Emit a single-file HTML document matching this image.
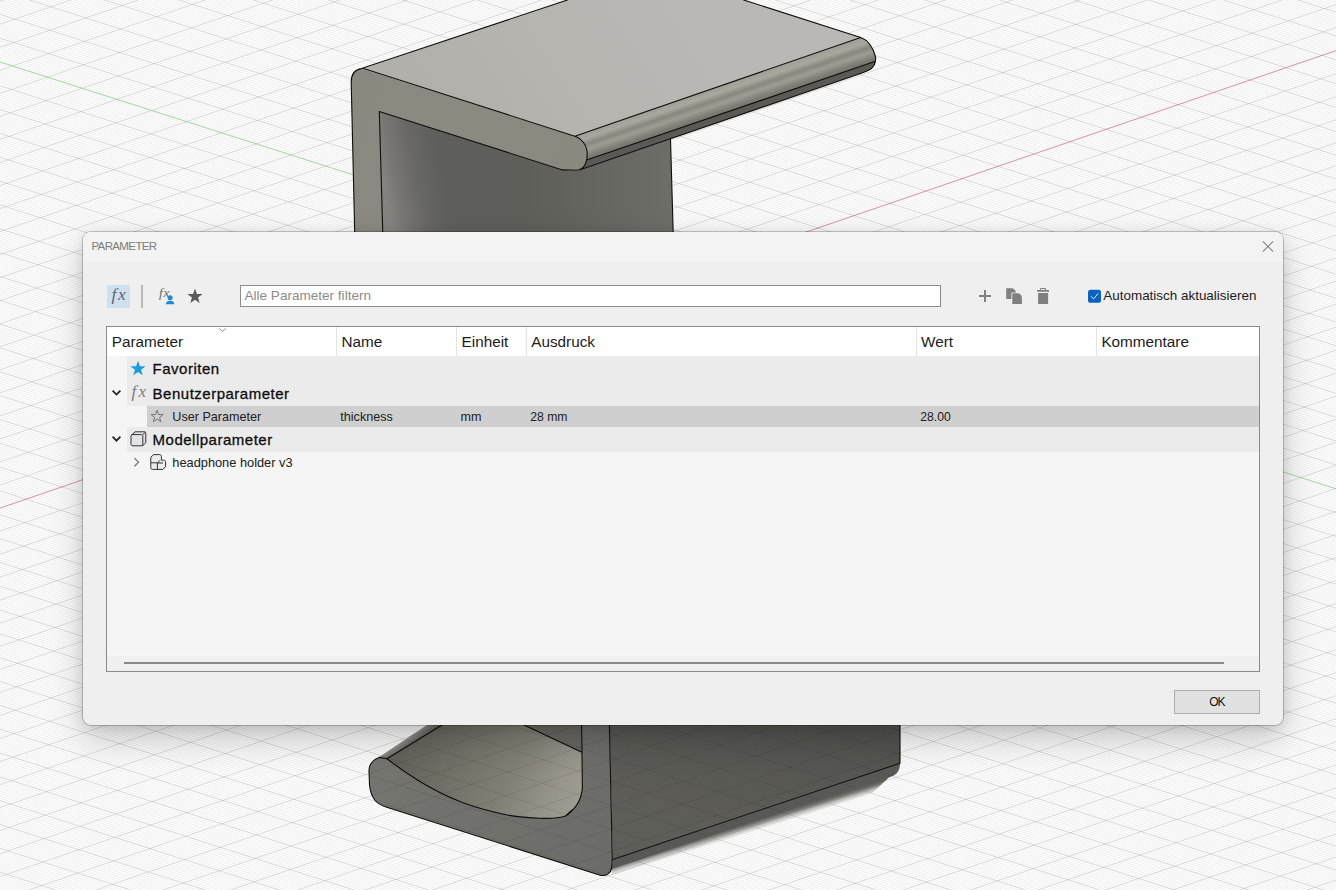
<!DOCTYPE html>
<html lang="de"><head><meta charset="utf-8"><title>PARAMETER</title>
<style>
html,body{margin:0;padding:0}
body{width:1336px;height:890px;overflow:hidden;position:relative;background:#fff;font-family:"Liberation Sans",sans-serif;color:#1e1e1e}
#bg{position:absolute;left:0;top:0}
#dlg{position:absolute;left:83px;top:232px;width:1200px;height:493px;background:#efefef;border-radius:8px;box-shadow:0 0 0 1px rgba(0,0,0,.2),0 14px 34px rgba(0,0,0,.2),0 2px 12px rgba(0,0,0,.10)}
#ttl{position:absolute;left:83px;top:232px;width:1200px;height:30px;background:#f3f3f3;border-radius:8px 8px 0 0}
.a{position:absolute}
.t{position:absolute;white-space:nowrap;line-height:1}
.h{font-size:15.3px;color:#1c1c1c}
.g{font-size:15px;color:#0e0e0e;letter-spacing:.5px;-webkit-text-stroke:.3px #0e0e0e}
.r{font-size:12.6px;color:#202020}
#ic{position:absolute;left:0;top:0}
</style></head>
<body>
<svg id="bg" width="1336" height="890" viewBox="0 0 1336 890">
<defs>
<g id="grid">
<path d="M0 3.5L1336 -453.9M0 5.8L1336 -451.6M0 8.1L1336 -449.3M0 10.4L1336 -447.0M0 12.7L1336 -444.7M0 15.0L1336 -442.4M0 17.3L1336 -440.1M0 19.6L1336 -437.8M0 21.9L1336 -435.5M0 26.5L1336 -430.9M0 28.8L1336 -428.6M0 31.1L1336 -426.3M0 33.5L1336 -424.0M0 35.8L1336 -421.7M0 38.1L1336 -419.4M0 40.4L1336 -417.1M0 42.7L1336 -414.8M0 45.0L1336 -412.5M0 49.6L1336 -407.9M0 51.9L1336 -405.6M0 54.2L1336 -403.3M0 56.5L1336 -401.0M0 58.8L1336 -398.6M0 61.1L1336 -396.3M0 63.4L1336 -394.0M0 65.7L1336 -391.7M0 68.0L1336 -389.4M0 72.6L1336 -384.8M0 74.9L1336 -382.5M0 77.2L1336 -380.2M0 79.5L1336 -377.9M0 81.8L1336 -375.6M0 84.1L1336 -373.3M0 86.4L1336 -371.0M0 88.7L1336 -368.7M0 91.1L1336 -366.4M0 95.7L1336 -361.8M0 98.0L1336 -359.5M0 100.3L1336 -357.2M0 102.6L1336 -354.9M0 104.9L1336 -352.6M0 107.2L1336 -350.3M0 109.5L1336 -348.0M0 111.8L1336 -345.7M0 114.1L1336 -343.4M0 118.7L1336 -338.7M0 121.0L1336 -336.4M0 123.3L1336 -334.1M0 125.6L1336 -331.8M0 127.9L1336 -329.5M0 130.2L1336 -327.2M0 132.5L1336 -324.9M0 134.8L1336 -322.6M0 137.1L1336 -320.3M0 141.7L1336 -315.7M0 144.0L1336 -313.4M0 146.3L1336 -311.1M0 148.7L1336 -308.8M0 151.0L1336 -306.5M0 153.3L1336 -304.2M0 155.6L1336 -301.9M0 157.9L1336 -299.6M0 160.2L1336 -297.3M0 164.8L1336 -292.7M0 167.1L1336 -290.4M0 169.4L1336 -288.1M0 171.7L1336 -285.8M0 174.0L1336 -283.4M0 176.3L1336 -281.1M0 178.6L1336 -278.8M0 180.9L1336 -276.5M0 183.2L1336 -274.2M0 187.8L1336 -269.6M0 190.1L1336 -267.3M0 192.4L1336 -265.0M0 194.7L1336 -262.7M0 197.0L1336 -260.4M0 199.3L1336 -258.1M0 201.6L1336 -255.8M0 203.9L1336 -253.5M0 206.3L1336 -251.2M0 210.9L1336 -246.6M0 213.2L1336 -244.3M0 215.5L1336 -242.0M0 217.8L1336 -239.7M0 220.1L1336 -237.4M0 222.4L1336 -235.1M0 224.7L1336 -232.8M0 227.0L1336 -230.5M0 229.3L1336 -228.2M0 233.9L1336 -223.5M0 236.2L1336 -221.2M0 238.5L1336 -218.9M0 240.8L1336 -216.6M0 243.1L1336 -214.3M0 245.4L1336 -212.0M0 247.7L1336 -209.7M0 250.0L1336 -207.4M0 252.3L1336 -205.1M0 256.9L1336 -200.5M0 259.2L1336 -198.2M0 261.5L1336 -195.9M0 263.9L1336 -193.6M0 266.2L1336 -191.3M0 268.5L1336 -189.0M0 270.8L1336 -186.7M0 273.1L1336 -184.4M0 275.4L1336 -182.1M0 280.0L1336 -177.5M0 282.3L1336 -175.2M0 284.6L1336 -172.9M0 286.9L1336 -170.6M0 289.2L1336 -168.2M0 291.5L1336 -165.9M0 293.8L1336 -163.6M0 296.1L1336 -161.3M0 298.4L1336 -159.0M0 303.0L1336 -154.4M0 305.3L1336 -152.1M0 307.6L1336 -149.8M0 309.9L1336 -147.5M0 312.2L1336 -145.2M0 314.5L1336 -142.9M0 316.8L1336 -140.6M0 319.1L1336 -138.3M0 321.5L1336 -136.0M0 326.1L1336 -131.4M0 328.4L1336 -129.1M0 330.7L1336 -126.8M0 333.0L1336 -124.5M0 335.3L1336 -122.2M0 337.6L1336 -119.9M0 339.9L1336 -117.6M0 342.2L1336 -115.3M0 344.5L1336 -113.0M0 349.1L1336 -108.3M0 351.4L1336 -106.0M0 353.7L1336 -103.7M0 356.0L1336 -101.4M0 358.3L1336 -99.1M0 360.6L1336 -96.8M0 362.9L1336 -94.5M0 365.2L1336 -92.2M0 367.5L1336 -89.9M0 372.1L1336 -85.3M0 374.4L1336 -83.0M0 376.7L1336 -80.7M0 379.1L1336 -78.4M0 381.4L1336 -76.1M0 383.7L1336 -73.8M0 386.0L1336 -71.5M0 388.3L1336 -69.2M0 390.6L1336 -66.9M0 395.2L1336 -62.3M0 397.5L1336 -60.0M0 399.8L1336 -57.7M0 402.1L1336 -55.4M0 404.4L1336 -53.0M0 406.7L1336 -50.7M0 409.0L1336 -48.4M0 411.3L1336 -46.1M0 413.6L1336 -43.8M0 418.2L1336 -39.2M0 420.5L1336 -36.9M0 422.8L1336 -34.6M0 425.1L1336 -32.3M0 427.4L1336 -30.0M0 429.7L1336 -27.7M0 432.0L1336 -25.4M0 434.3L1336 -23.1M0 436.7L1336 -20.8M0 441.3L1336 -16.2M0 443.6L1336 -13.9M0 445.9L1336 -11.6M0 448.2L1336 -9.3M0 450.5L1336 -7.0M0 452.8L1336 -4.7M0 455.1L1336 -2.4M0 457.4L1336 -0.1M0 459.7L1336 2.2M0 464.3L1336 6.9M0 466.6L1336 9.2M0 468.9L1336 11.5M0 471.2L1336 13.8M0 473.5L1336 16.1M0 475.8L1336 18.4M0 478.1L1336 20.7M0 480.4L1336 23.0M0 482.7L1336 25.3M0 487.3L1336 29.9M0 489.6L1336 32.2M0 491.9L1336 34.5M0 494.3L1336 36.8M0 496.6L1336 39.1M0 498.9L1336 41.4M0 501.2L1336 43.7M0 503.5L1336 46.0M0 505.8L1336 48.3M0 510.4L1336 52.9M0 512.7L1336 55.2M0 515.0L1336 57.5M0 517.3L1336 59.8M0 519.6L1336 62.2M0 521.9L1336 64.5M0 524.2L1336 66.8M0 526.5L1336 69.1M0 528.8L1336 71.4M0 533.4L1336 76.0M0 535.7L1336 78.3M0 538.0L1336 80.6M0 540.3L1336 82.9M0 542.6L1336 85.2M0 544.9L1336 87.5M0 547.2L1336 89.8M0 549.5L1336 92.1M0 551.9L1336 94.4M0 556.5L1336 99.0M0 558.8L1336 101.3M0 561.1L1336 103.6M0 563.4L1336 105.9M0 565.7L1336 108.2M0 568.0L1336 110.5M0 570.3L1336 112.8M0 572.6L1336 115.1M0 574.9L1336 117.4M0 579.5L1336 122.1M0 581.8L1336 124.4M0 584.1L1336 126.7M0 586.4L1336 129.0M0 588.7L1336 131.3M0 591.0L1336 133.6M0 593.3L1336 135.9M0 595.6L1336 138.2M0 597.9L1336 140.5M0 602.5L1336 145.1M0 604.8L1336 147.4M0 607.1L1336 149.7M0 609.5L1336 152.0M0 611.8L1336 154.3M0 614.1L1336 156.6M0 616.4L1336 158.9M0 618.7L1336 161.2M0 621.0L1336 163.5M0 625.6L1336 168.1M0 627.9L1336 170.4M0 630.2L1336 172.7M0 632.5L1336 175.0M0 634.8L1336 177.4M0 637.1L1336 179.7M0 639.4L1336 182.0M0 641.7L1336 184.3M0 644.0L1336 186.6M0 648.6L1336 191.2M0 650.9L1336 193.5M0 653.2L1336 195.8M0 655.5L1336 198.1M0 657.8L1336 200.4M0 660.1L1336 202.7M0 662.4L1336 205.0M0 664.7L1336 207.3M0 667.1L1336 209.6M0 671.7L1336 214.2M0 674.0L1336 216.5M0 676.3L1336 218.8M0 678.6L1336 221.1M0 680.9L1336 223.4M0 683.2L1336 225.7M0 685.5L1336 228.0M0 687.8L1336 230.3M0 690.1L1336 232.6M0 694.7L1336 237.3M0 697.0L1336 239.6M0 699.3L1336 241.9M0 701.6L1336 244.2M0 703.9L1336 246.5M0 706.2L1336 248.8M0 708.5L1336 251.1M0 710.8L1336 253.4M0 713.1L1336 255.7M0 717.7L1336 260.3M0 720.0L1336 262.6M0 722.3L1336 264.9M0 724.7L1336 267.2M0 727.0L1336 269.5M0 729.3L1336 271.8M0 731.6L1336 274.1M0 733.9L1336 276.4M0 736.2L1336 278.7M0 740.8L1336 283.3M0 743.1L1336 285.6M0 745.4L1336 287.9M0 747.7L1336 290.2M0 750.0L1336 292.6M0 752.3L1336 294.9M0 754.6L1336 297.2M0 756.9L1336 299.5M0 759.2L1336 301.8M0 763.8L1336 306.4M0 766.1L1336 308.7M0 768.4L1336 311.0M0 770.7L1336 313.3M0 773.0L1336 315.6M0 775.3L1336 317.9M0 777.6L1336 320.2M0 779.9L1336 322.5M0 782.3L1336 324.8M0 786.9L1336 329.4M0 789.2L1336 331.7M0 791.5L1336 334.0M0 793.8L1336 336.3M0 796.1L1336 338.6M0 798.4L1336 340.9M0 800.7L1336 343.2M0 803.0L1336 345.5M0 805.3L1336 347.8M0 809.9L1336 352.5M0 812.2L1336 354.8M0 814.5L1336 357.1M0 816.8L1336 359.4M0 819.1L1336 361.7M0 821.4L1336 364.0M0 823.7L1336 366.3M0 826.0L1336 368.6M0 828.3L1336 370.9M0 832.9L1336 375.5M0 835.2L1336 377.8M0 837.5L1336 380.1M0 839.9L1336 382.4M0 842.2L1336 384.7M0 844.5L1336 387.0M0 846.8L1336 389.3M0 849.1L1336 391.6M0 851.4L1336 393.9M0 856.0L1336 398.5M0 858.3L1336 400.8M0 860.6L1336 403.1M0 862.9L1336 405.4M0 865.2L1336 407.8M0 867.5L1336 410.1M0 869.8L1336 412.4M0 872.1L1336 414.7M0 874.4L1336 417.0M0 879.0L1336 421.6M0 881.3L1336 423.9M0 883.6L1336 426.2M0 885.9L1336 428.5M0 888.2L1336 430.8M0 890.5L1336 433.1M0 892.8L1336 435.4M0 895.1L1336 437.7M0 897.5L1336 440.0M0 902.1L1336 444.6M0 904.4L1336 446.9M0 906.7L1336 449.2M0 909.0L1336 451.5M0 911.3L1336 453.8M0 913.6L1336 456.1M0 915.9L1336 458.4M0 918.2L1336 460.7M0 920.5L1336 463.0M0 925.1L1336 467.7M0 927.4L1336 470.0M0 929.7L1336 472.3M0 932.0L1336 474.6M0 934.3L1336 476.9M0 936.6L1336 479.2M0 938.9L1336 481.5M0 941.2L1336 483.8M0 943.5L1336 486.1M0 948.1L1336 490.7M0 950.4L1336 493.0M0 952.7L1336 495.3M0 955.1L1336 497.6M0 957.4L1336 499.9M0 959.7L1336 502.2M0 962.0L1336 504.5M0 964.3L1336 506.8M0 966.6L1336 509.1M0 971.2L1336 513.7M0 973.5L1336 516.0M0 975.8L1336 518.3M0 978.1L1336 520.6M0 980.4L1336 523.0M0 982.7L1336 525.3M0 985.0L1336 527.6M0 987.3L1336 529.9M0 989.6L1336 532.2M0 994.2L1336 536.8M0 996.5L1336 539.1M0 998.8L1336 541.4M0 1001.1L1336 543.7M0 1003.4L1336 546.0M0 1005.7L1336 548.3M0 1008.0L1336 550.6M0 1010.3L1336 552.9M0 1012.7L1336 555.2M0 1017.3L1336 559.8M0 1019.6L1336 562.1M0 1021.9L1336 564.4M0 1024.2L1336 566.7M0 1026.5L1336 569.0M0 1028.8L1336 571.3M0 1031.1L1336 573.6M0 1033.4L1336 575.9M0 1035.7L1336 578.2M0 1040.3L1336 582.9M0 1042.6L1336 585.2M0 1044.9L1336 587.5M0 1047.2L1336 589.8M0 1049.5L1336 592.1M0 1051.8L1336 594.4M0 1054.1L1336 596.7M0 1056.4L1336 599.0M0 1058.7L1336 601.3M0 1063.3L1336 605.9M0 1065.6L1336 608.2M0 1067.9L1336 610.5M0 1070.3L1336 612.8M0 1072.6L1336 615.1M0 1074.9L1336 617.4M0 1077.2L1336 619.7M0 1079.5L1336 622.0M0 1081.8L1336 624.3M0 1086.4L1336 628.9M0 1088.7L1336 631.2M0 1091.0L1336 633.5M0 1093.3L1336 635.8M0 1095.6L1336 638.2M0 1097.9L1336 640.5M0 1100.2L1336 642.8M0 1102.5L1336 645.1M0 1104.8L1336 647.4M0 1109.4L1336 652.0M0 1111.7L1336 654.3M0 1114.0L1336 656.6M0 1116.3L1336 658.9M0 1118.6L1336 661.2M0 1120.9L1336 663.5M0 1123.2L1336 665.8M0 1125.5L1336 668.1M0 1127.9L1336 670.4M0 1132.5L1336 675.0M0 1134.8L1336 677.3M0 1137.1L1336 679.6M0 1139.4L1336 681.9M0 1141.7L1336 684.2M0 1144.0L1336 686.5M0 1146.3L1336 688.8M0 1148.6L1336 691.1M0 1150.9L1336 693.4M0 1155.5L1336 698.1M0 1157.8L1336 700.4M0 1160.1L1336 702.7M0 1162.4L1336 705.0M0 1164.7L1336 707.3M0 1167.0L1336 709.6M0 1169.3L1336 711.9M0 1171.6L1336 714.2M0 1173.9L1336 716.5M0 1178.5L1336 721.1M0 1180.8L1336 723.4M0 1183.1L1336 725.7M0 1185.5L1336 728.0M0 1187.8L1336 730.3M0 1190.1L1336 732.6M0 1192.4L1336 734.9M0 1194.7L1336 737.2M0 1197.0L1336 739.5M0 1201.6L1336 744.1M0 1203.9L1336 746.4M0 1206.2L1336 748.7M0 1208.5L1336 751.0M0 1210.8L1336 753.4M0 1213.1L1336 755.7M0 1215.4L1336 758.0M0 1217.7L1336 760.3M0 1220.0L1336 762.6M0 1224.6L1336 767.2M0 1226.9L1336 769.5M0 1229.2L1336 771.8M0 1231.5L1336 774.1M0 1233.8L1336 776.4M0 1236.1L1336 778.7M0 1238.4L1336 781.0M0 1240.7L1336 783.3M0 1243.1L1336 785.6M0 1247.7L1336 790.2M0 1250.0L1336 792.5M0 1252.3L1336 794.8M0 1254.6L1336 797.1M0 1256.9L1336 799.4M0 1259.2L1336 801.7M0 1261.5L1336 804.0M0 1263.8L1336 806.3M0 1266.1L1336 808.6M0 1270.7L1336 813.3M0 1273.0L1336 815.6M0 1275.3L1336 817.9M0 1277.6L1336 820.2M0 1279.9L1336 822.5M0 1282.2L1336 824.8M0 1284.5L1336 827.1M0 1286.8L1336 829.4M0 1289.1L1336 831.7M0 1293.7L1336 836.3M0 1296.0L1336 838.6M0 1298.3L1336 840.9M0 1300.7L1336 843.2M0 1303.0L1336 845.5M0 1305.3L1336 847.8M0 1307.6L1336 850.1M0 1309.9L1336 852.4M0 1312.2L1336 854.7M0 1316.8L1336 859.3M0 1319.1L1336 861.6M0 1321.4L1336 863.9M0 1323.7L1336 866.2M0 1326.0L1336 868.6M0 1328.3L1336 870.9M0 1330.6L1336 873.2M0 1332.9L1336 875.5M0 1335.2L1336 877.8M0 1339.8L1336 882.4M0 1342.1L1336 884.7M0 1344.4L1336 887.0M0 1346.7L1336 889.3M0 -426.6L1336 0.3M0 -424.2L1336 2.7M0 -421.8L1336 5.1M0 -419.4L1336 7.4M0 -417.0L1336 9.8M0 -412.3L1336 14.6M0 -409.9L1336 17.0M0 -407.5L1336 19.4M0 -405.1L1336 21.7M0 -402.7L1336 24.1M0 -400.3L1336 26.5M0 -398.0L1336 28.9M0 -395.6L1336 31.3M0 -393.2L1336 33.7M0 -388.4L1336 38.4M0 -386.0L1336 40.8M0 -383.7L1336 43.2M0 -381.3L1336 45.6M0 -378.9L1336 48.0M0 -376.5L1336 50.3M0 -374.1L1336 52.7M0 -371.7L1336 55.1M0 -369.4L1336 57.5M0 -364.6L1336 62.3M0 -362.2L1336 64.6M0 -359.8L1336 67.0M0 -357.5L1336 69.4M0 -355.1L1336 71.8M0 -352.7L1336 74.2M0 -350.3L1336 76.6M0 -347.9L1336 78.9M0 -345.5L1336 81.3M0 -340.8L1336 86.1M0 -338.4L1336 88.5M0 -336.0L1336 90.8M0 -333.6L1336 93.2M0 -331.2L1336 95.6M0 -328.9L1336 98.0M0 -326.5L1336 100.4M0 -324.1L1336 102.8M0 -321.7L1336 105.1M0 -316.9L1336 109.9M0 -314.6L1336 112.3M0 -312.2L1336 114.7M0 -309.8L1336 117.1M0 -307.4L1336 119.4M0 -305.0L1336 121.8M0 -302.6L1336 124.2M0 -300.3L1336 126.6M0 -297.9L1336 129.0M0 -293.1L1336 133.7M0 -290.7L1336 136.1M0 -288.3L1336 138.5M0 -286.0L1336 140.9M0 -283.6L1336 143.3M0 -281.2L1336 145.7M0 -278.8L1336 148.0M0 -276.4L1336 150.4M0 -274.0L1336 152.8M0 -269.3L1336 157.6M0 -266.9L1336 160.0M0 -264.5L1336 162.3M0 -262.1L1336 164.7M0 -259.7L1336 167.1M0 -257.4L1336 169.5M0 -255.0L1336 171.9M0 -252.6L1336 174.3M0 -250.2L1336 176.6M0 -245.4L1336 181.4M0 -243.1L1336 183.8M0 -240.7L1336 186.2M0 -238.3L1336 188.6M0 -235.9L1336 190.9M0 -233.5L1336 193.3M0 -231.2L1336 195.7M0 -228.8L1336 198.1M0 -226.4L1336 200.5M0 -221.6L1336 205.2M0 -219.2L1336 207.6M0 -216.9L1336 210.0M0 -214.5L1336 212.4M0 -212.1L1336 214.8M0 -209.7L1336 217.1M0 -207.3L1336 219.5M0 -204.9L1336 221.9M0 -202.6L1336 224.3M0 -197.8L1336 229.1M0 -195.4L1336 231.4M0 -193.0L1336 233.8M0 -190.6L1336 236.2M0 -188.3L1336 238.6M0 -185.9L1336 241.0M0 -183.5L1336 243.4M0 -181.1L1336 245.7M0 -178.7L1336 248.1M0 -174.0L1336 252.9M0 -171.6L1336 255.3M0 -169.2L1336 257.7M0 -166.8L1336 260.0M0 -164.4L1336 262.4M0 -162.0L1336 264.8M0 -159.7L1336 267.2M0 -157.3L1336 269.6M0 -154.9L1336 272.0M0 -150.1L1336 276.7M0 -147.7L1336 279.1M0 -145.4L1336 281.5M0 -143.0L1336 283.9M0 -140.6L1336 286.3M0 -138.2L1336 288.6M0 -135.8L1336 291.0M0 -133.4L1336 293.4M0 -131.1L1336 295.8M0 -126.3L1336 300.6M0 -123.9L1336 302.9M0 -121.5L1336 305.3M0 -119.2L1336 307.7M0 -116.8L1336 310.1M0 -114.4L1336 312.5M0 -112.0L1336 314.9M0 -109.6L1336 317.2M0 -107.2L1336 319.6M0 -102.5L1336 324.4M0 -100.1L1336 326.8M0 -97.7L1336 329.1M0 -95.3L1336 331.5M0 -92.9L1336 333.9M0 -90.6L1336 336.3M0 -88.2L1336 338.7M0 -85.8L1336 341.1M0 -83.4L1336 343.4M0 -78.6L1336 348.2M0 -76.3L1336 350.6M0 -73.9L1336 353.0M0 -71.5L1336 355.4M0 -69.1L1336 357.7M0 -66.7L1336 360.1M0 -64.3L1336 362.5M0 -62.0L1336 364.9M0 -59.6L1336 367.3M0 -54.8L1336 372.0M0 -52.4L1336 374.4M0 -50.0L1336 376.8M0 -47.7L1336 379.2M0 -45.3L1336 381.6M0 -42.9L1336 384.0M0 -40.5L1336 386.3M0 -38.1L1336 388.7M0 -35.7L1336 391.1M0 -31.0L1336 395.9M0 -28.6L1336 398.3M0 -26.2L1336 400.6M0 -23.8L1336 403.0M0 -21.4L1336 405.4M0 -19.1L1336 407.8M0 -16.7L1336 410.2M0 -14.3L1336 412.6M0 -11.9L1336 414.9M0 -7.2L1336 419.7M0 -4.8L1336 422.1M0 -2.4L1336 424.5M0 -0.0L1336 426.9M0 2.4L1336 429.2M0 4.8L1336 431.6M0 7.1L1336 434.0M0 9.5L1336 436.4M0 11.9L1336 438.8M0 16.7L1336 443.5M0 19.1L1336 445.9M0 21.4L1336 448.3M0 23.8L1336 450.7M0 26.2L1336 453.1M0 28.6L1336 455.4M0 31.0L1336 457.8M0 33.4L1336 460.2M0 35.7L1336 462.6M0 40.5L1336 467.4M0 42.9L1336 469.7M0 45.3L1336 472.1M0 47.7L1336 474.5M0 50.0L1336 476.9M0 52.4L1336 479.3M0 54.8L1336 481.7M0 57.2L1336 484.0M0 59.6L1336 486.4M0 64.3L1336 491.2M0 66.7L1336 493.6M0 69.1L1336 496.0M0 71.5L1336 498.3M0 73.9L1336 500.7M0 76.3L1336 503.1M0 78.6L1336 505.5M0 81.0L1336 507.9M0 83.4L1336 510.3M0 88.2L1336 515.0M0 90.6L1336 517.4M0 92.9L1336 519.8M0 95.3L1336 522.2M0 97.7L1336 524.6M0 100.1L1336 526.9M0 102.5L1336 529.3M0 104.9L1336 531.7M0 107.2L1336 534.1M0 112.0L1336 538.9M0 114.4L1336 541.2M0 116.8L1336 543.6M0 119.1L1336 546.0M0 121.5L1336 548.4M0 123.9L1336 550.8M0 126.3L1336 553.1M0 128.7L1336 555.5M0 131.1L1336 557.9M0 135.8L1336 562.7M0 138.2L1336 565.1M0 140.6L1336 567.4M0 143.0L1336 569.8M0 145.4L1336 572.2M0 147.7L1336 574.6M0 150.1L1336 577.0M0 152.5L1336 579.4M0 154.9L1336 581.7M0 159.7L1336 586.5M0 162.0L1336 588.9M0 164.4L1336 591.3M0 166.8L1336 593.7M0 169.2L1336 596.0M0 171.6L1336 598.4M0 174.0L1336 600.8M0 176.3L1336 603.2M0 178.7L1336 605.6M0 183.5L1336 610.3M0 185.9L1336 612.7M0 188.3L1336 615.1M0 190.6L1336 617.5M0 193.0L1336 619.9M0 195.4L1336 622.3M0 197.8L1336 624.6M0 200.2L1336 627.0M0 202.6L1336 629.4M0 207.3L1336 634.2M0 209.7L1336 636.6M0 212.1L1336 638.9M0 214.5L1336 641.3M0 216.9L1336 643.7M0 219.2L1336 646.1M0 221.6L1336 648.5M0 224.0L1336 650.9M0 226.4L1336 653.2M0 231.1L1336 658.0M0 233.5L1336 660.4M0 235.9L1336 662.8M0 238.3L1336 665.2M0 240.7L1336 667.5M0 243.1L1336 669.9M0 245.4L1336 672.3M0 247.8L1336 674.7M0 250.2L1336 677.1M0 255.0L1336 681.8M0 257.4L1336 684.2M0 259.7L1336 686.6M0 262.1L1336 689.0M0 264.5L1336 691.4M0 266.9L1336 693.7M0 269.3L1336 696.1M0 271.7L1336 698.5M0 274.0L1336 700.9M0 278.8L1336 705.7M0 281.2L1336 708.0M0 283.6L1336 710.4M0 286.0L1336 712.8M0 288.3L1336 715.2M0 290.7L1336 717.6M0 293.1L1336 720.0M0 295.5L1336 722.3M0 297.9L1336 724.7M0 302.6L1336 729.5M0 305.0L1336 731.9M0 307.4L1336 734.3M0 309.8L1336 736.6M0 312.2L1336 739.0M0 314.6L1336 741.4M0 316.9L1336 743.8M0 319.3L1336 746.2M0 321.7L1336 748.6M0 326.5L1336 753.3M0 328.9L1336 755.7M0 331.2L1336 758.1M0 333.6L1336 760.5M0 336.0L1336 762.9M0 338.4L1336 765.2M0 340.8L1336 767.6M0 343.2L1336 770.0M0 345.5L1336 772.4M0 350.3L1336 777.2M0 352.7L1336 779.5M0 355.1L1336 781.9M0 357.4L1336 784.3M0 359.8L1336 786.7M0 362.2L1336 789.1M0 364.6L1336 791.5M0 367.0L1336 793.8M0 369.4L1336 796.2M0 374.1L1336 801.0M0 376.5L1336 803.4M0 378.9L1336 805.7M0 381.3L1336 808.1M0 383.7L1336 810.5M0 386.0L1336 812.9M0 388.4L1336 815.3M0 390.8L1336 817.7M0 393.2L1336 820.0M0 398.0L1336 824.8M0 400.3L1336 827.2M0 402.7L1336 829.6M0 405.1L1336 832.0M0 407.5L1336 834.3M0 409.9L1336 836.7M0 412.3L1336 839.1M0 414.6L1336 841.5M0 417.0L1336 843.9M0 421.8L1336 848.6M0 424.2L1336 851.0M0 426.6L1336 853.4M0 428.9L1336 855.8M0 431.3L1336 858.2M0 433.7L1336 860.6M0 436.1L1336 862.9M0 438.5L1336 865.3M0 440.9L1336 867.7M0 445.6L1336 872.5M0 448.0L1336 874.9M0 450.4L1336 877.2M0 452.8L1336 879.6M0 455.2L1336 882.0M0 457.5L1336 884.4M0 459.9L1336 886.8M0 462.3L1336 889.2M0 464.7L1336 891.5M0 469.4L1336 896.3M0 471.8L1336 898.7M0 474.2L1336 901.1M0 476.6L1336 903.5M0 479.0L1336 905.8M0 481.4L1336 908.2M0 483.7L1336 910.6M0 486.1L1336 913.0M0 488.5L1336 915.4M0 493.3L1336 920.1M0 495.7L1336 922.5M0 498.0L1336 924.9M0 500.4L1336 927.3M0 502.8L1336 929.7M0 505.2L1336 932.0M0 507.6L1336 934.4M0 510.0L1336 936.8M0 512.3L1336 939.2M0 517.1L1336 944.0M0 519.5L1336 946.3M0 521.9L1336 948.7M0 524.3L1336 951.1M0 526.6L1336 953.5M0 529.0L1336 955.9M0 531.4L1336 958.3M0 533.8L1336 960.6M0 536.2L1336 963.0M0 540.9L1336 967.8M0 543.3L1336 970.2M0 545.7L1336 972.6M0 548.1L1336 974.9M0 550.5L1336 977.3M0 552.9L1336 979.7M0 555.2L1336 982.1M0 557.6L1336 984.5M0 560.0L1336 986.9M0 564.8L1336 991.6M0 567.2L1336 994.0M0 569.5L1336 996.4M0 571.9L1336 998.8M0 574.3L1336 1001.2M0 576.7L1336 1003.5M0 579.1L1336 1005.9M0 581.5L1336 1008.3M0 583.8L1336 1010.7M0 588.6L1336 1015.5M0 591.0L1336 1017.8M0 593.4L1336 1020.2M0 595.7L1336 1022.6M0 598.1L1336 1025.0M0 600.5L1336 1027.4M0 602.9L1336 1029.8M0 605.3L1336 1032.1M0 607.7L1336 1034.5M0 612.4L1336 1039.3M0 614.8L1336 1041.7M0 617.2L1336 1044.0M0 619.6L1336 1046.4M0 622.0L1336 1048.8M0 624.3L1336 1051.2M0 626.7L1336 1053.6M0 629.1L1336 1056.0M0 631.5L1336 1058.3M0 636.3L1336 1063.1M0 638.6L1336 1065.5M0 641.0L1336 1067.9M0 643.4L1336 1070.3M0 645.8L1336 1072.6M0 648.2L1336 1075.0M0 650.6L1336 1077.4M0 652.9L1336 1079.8M0 655.3L1336 1082.2M0 660.1L1336 1086.9M0 662.5L1336 1089.3M0 664.9L1336 1091.7M0 667.2L1336 1094.1M0 669.6L1336 1096.5M0 672.0L1336 1098.9M0 674.4L1336 1101.2M0 676.8L1336 1103.6M0 679.2L1336 1106.0M0 683.9L1336 1110.8M0 686.3L1336 1113.2M0 688.7L1336 1115.5M0 691.1L1336 1117.9M0 693.5L1336 1120.3M0 695.8L1336 1122.7M0 698.2L1336 1125.1M0 700.6L1336 1127.5M0 703.0L1336 1129.8M0 707.7L1336 1134.6M0 710.1L1336 1137.0M0 712.5L1336 1139.4M0 714.9L1336 1141.8M0 717.3L1336 1144.1M0 719.7L1336 1146.5M0 722.0L1336 1148.9M0 724.4L1336 1151.3M0 726.8L1336 1153.7M0 731.6L1336 1158.4M0 734.0L1336 1160.8M0 736.3L1336 1163.2M0 738.7L1336 1165.6M0 741.1L1336 1168.0M0 743.5L1336 1170.3M0 745.9L1336 1172.7M0 748.3L1336 1175.1M0 750.6L1336 1177.5M0 755.4L1336 1182.3M0 757.8L1336 1184.6M0 760.2L1336 1187.0M0 762.6L1336 1189.4M0 764.9L1336 1191.8M0 767.3L1336 1194.2M0 769.7L1336 1196.6M0 772.1L1336 1198.9M0 774.5L1336 1201.3M0 779.2L1336 1206.1M0 781.6L1336 1208.5M0 784.0L1336 1210.9M0 786.4L1336 1213.2M0 788.8L1336 1215.6M0 791.2L1336 1218.0M0 793.5L1336 1220.4M0 795.9L1336 1222.8M0 798.3L1336 1225.2M0 803.1L1336 1229.9M0 805.5L1336 1232.3M0 807.8L1336 1234.7M0 810.2L1336 1237.1M0 812.6L1336 1239.5M0 815.0L1336 1241.8M0 817.4L1336 1244.2M0 819.8L1336 1246.6M0 822.1L1336 1249.0M0 826.9L1336 1253.8M0 829.3L1336 1256.1M0 831.7L1336 1258.5M0 834.0L1336 1260.9M0 836.4L1336 1263.3M0 838.8L1336 1265.7M0 841.2L1336 1268.0M0 843.6L1336 1270.4M0 846.0L1336 1272.8M0 850.7L1336 1277.6M0 853.1L1336 1280.0M0 855.5L1336 1282.3M0 857.9L1336 1284.7M0 860.3L1336 1287.1M0 862.6L1336 1289.5M0 865.0L1336 1291.9M0 867.4L1336 1294.3M0 869.8L1336 1296.6M0 874.6L1336 1301.4M0 876.9L1336 1303.8M0 879.3L1336 1306.2M0 881.7L1336 1308.6M0 884.1L1336 1310.9M0 886.5L1336 1313.3M0 888.9L1336 1315.7" stroke="#000" stroke-width=".55" stroke-opacity=".08" fill="none"/>
<path d="M0 1.2L1336 -456.2M0 24.2L1336 -433.2M0 47.3L1336 -410.2M0 70.3L1336 -387.1M0 93.4L1336 -364.1M0 116.4L1336 -341.0M0 139.4L1336 -318.0M0 162.5L1336 -295.0M0 185.5L1336 -271.9M0 208.6L1336 -248.9M0 231.6L1336 -225.8M0 254.6L1336 -202.8M0 277.7L1336 -179.8M0 300.7L1336 -156.7M0 323.8L1336 -133.7M0 346.8L1336 -110.6M0 369.8L1336 -87.6M0 392.9L1336 -64.6M0 415.9L1336 -41.5M0 439.0L1336 -18.5M0 462.0L1336 4.6M0 485.0L1336 27.6M0 508.1L1336 50.6M0 531.1L1336 73.7M0 554.2L1336 96.7M0 577.2L1336 119.8M0 600.2L1336 142.8M0 623.3L1336 165.8M0 646.3L1336 188.9M0 669.4L1336 211.9M0 692.4L1336 235.0M0 715.4L1336 258.0M0 738.5L1336 281.0M0 761.5L1336 304.1M0 784.6L1336 327.1M0 807.6L1336 350.2M0 830.6L1336 373.2M0 853.7L1336 396.2M0 876.7L1336 419.3M0 899.8L1336 442.3M0 922.8L1336 465.4M0 945.8L1336 488.4M0 968.9L1336 511.4M0 991.9L1336 534.5M0 1015.0L1336 557.5M0 1038.0L1336 580.6M0 1061.0L1336 603.6M0 1084.1L1336 626.6M0 1107.1L1336 649.7M0 1130.2L1336 672.7M0 1153.2L1336 695.8M0 1176.2L1336 718.8M0 1199.3L1336 741.8M0 1222.3L1336 764.9M0 1245.4L1336 787.9M0 1268.4L1336 811.0M0 1291.4L1336 834.0M0 1314.5L1336 857.0M0 1337.5L1336 880.1M0 -414.6L1336 12.2M0 -390.8L1336 36.0M0 -367.0L1336 59.9M0 -343.2L1336 83.7M0 -319.3L1336 107.5M0 -295.5L1336 131.4M0 -271.7L1336 155.2M0 -247.8L1336 179.0M0 -224.0L1336 202.8M0 -200.2L1336 226.7M0 -176.3L1336 250.5M0 -152.5L1336 274.3M0 -128.7L1336 298.2M0 -104.9L1336 322.0M0 -81.0L1336 345.8M0 -57.2L1336 369.7M0 -33.4L1336 393.5M0 -9.5L1336 417.3M0 14.3L1336 441.1M0 38.1L1336 465.0M0 62.0L1336 488.8M0 85.8L1336 512.6M0 109.6L1336 536.5M0 133.4L1336 560.3M0 157.3L1336 584.1M0 181.1L1336 608.0M0 204.9L1336 631.8M0 228.8L1336 655.6M0 252.6L1336 679.4M0 276.4L1336 703.3M0 300.3L1336 727.1M0 324.1L1336 750.9M0 347.9L1336 774.8M0 371.7L1336 798.6M0 395.6L1336 822.4M0 419.4L1336 846.3M0 443.2L1336 870.1M0 467.1L1336 893.9M0 490.9L1336 917.7M0 514.7L1336 941.6M0 538.6L1336 965.4M0 562.4L1336 989.2M0 586.2L1336 1013.1M0 610.0L1336 1036.9M0 633.9L1336 1060.7M0 657.7L1336 1084.6M0 681.5L1336 1108.4M0 705.4L1336 1132.2M0 729.2L1336 1156.0M0 753.0L1336 1179.9M0 776.9L1336 1203.7M0 800.7L1336 1227.5M0 824.5L1336 1251.4M0 848.3L1336 1275.2M0 872.2L1336 1299.0" stroke="#000" stroke-width=".7" stroke-opacity=".21" fill="none"/>
</g>
<linearGradient id="gTop" gradientUnits="userSpaceOnUse" x1="470" y1="150" x2="700" y2="0"><stop offset="0" stop-color="#b1b0ab"/><stop offset=".5" stop-color="#b6b5b0"/><stop offset="1" stop-color="#b9b8b4"/></linearGradient>
<linearGradient id="gCap" gradientUnits="userSpaceOnUse" x1="352" y1="90" x2="585" y2="160"><stop offset="0" stop-color="#8a887f"/><stop offset=".5" stop-color="#8c8a80"/><stop offset="1" stop-color="#8b897f"/></linearGradient>
<linearGradient id="gBull" gradientUnits="userSpaceOnUse" x1="574.8" y1="136.2" x2="585.5" y2="167.5"><stop offset="0" stop-color="#a19e95"/><stop offset=".17" stop-color="#aaa79e"/><stop offset=".34" stop-color="#89867d"/><stop offset=".49" stop-color="#9f9c93"/><stop offset=".69" stop-color="#7e7c75"/><stop offset=".795" stop-color="#77756e"/><stop offset=".805" stop-color="#595853"/><stop offset="1" stop-color="#5c5b56"/></linearGradient>
<linearGradient id="gIn" gradientUnits="userSpaceOnUse" x1="380" y1="0" x2="673" y2="0"><stop offset="0" stop-color="#63635f"/><stop offset=".2" stop-color="#5e5e5a"/><stop offset=".5" stop-color="#5f5f5a"/><stop offset=".75" stop-color="#666661"/><stop offset="1" stop-color="#6e6e69"/></linearGradient><linearGradient id="gInL" gradientUnits="userSpaceOnUse" x1="381" y1="172" x2="441" y2="160"><stop offset="0" stop-color="#8a8984" stop-opacity=".85"/><stop offset=".25" stop-color="#868580" stop-opacity=".55"/><stop offset=".6" stop-color="#82817c" stop-opacity=".2"/><stop offset="1" stop-color="#80807b" stop-opacity="0"/></linearGradient>
<linearGradient id="gRight" gradientUnits="userSpaceOnUse" x1="760" y1="700" x2="720" y2="840"><stop offset="0" stop-color="#555550"/><stop offset="1" stop-color="#62625c"/></linearGradient>
<linearGradient id="gFront" gradientUnits="userSpaceOnUse" x1="380" y1="780" x2="610" y2="840"><stop offset="0" stop-color="#787873"/><stop offset="1" stop-color="#70706b"/></linearGradient>
<linearGradient id="gHook" gradientUnits="userSpaceOnUse" x1="410" y1="735" x2="570" y2="815"><stop offset="0" stop-color="#67655d"/><stop offset=".3" stop-color="#76736a"/><stop offset=".6" stop-color="#858278"/><stop offset=".85" stop-color="#9a978c"/><stop offset="1" stop-color="#a3a095"/></linearGradient>
<linearGradient id="gUnder" gradientUnits="userSpaceOnUse" x1="750" y1="822.2" x2="753" y2="831.8"><stop offset="0" stop-color="#5c5c57" stop-opacity="1"/><stop offset=".3" stop-color="#62625d" stop-opacity=".8"/><stop offset=".6" stop-color="#777773" stop-opacity=".42"/><stop offset=".85" stop-color="#888" stop-opacity=".18"/><stop offset="1" stop-color="#999" stop-opacity="0"/></linearGradient>
<linearGradient id="gTip" gradientUnits="userSpaceOnUse" x1="420" y1="729" x2="428" y2="741"><stop offset="0" stop-color="#9a9a96"/><stop offset=".25" stop-color="#807f7a"/><stop offset=".7" stop-color="#5f5e58"/><stop offset="1" stop-color="#595852"/></linearGradient><clipPath id="cLow"><path d="M464.1 700L379.1 757.1C370 762 368 775 369.5 785C371 798 376 804 386 807L599.3 875C606 877 611 873 611.6 867.7L891.4 777C899 773 900 768 900 763L900 700Z"/></clipPath>

</defs>
<use href="#grid"/>
<path d="M0 508.1L1336 50.6" stroke="#d8506e" stroke-width=".8" stroke-opacity=".62" fill="none"/>
<path d="M0 62.0L1336 488.8" stroke="#5fdc5f" stroke-width=".8" stroke-opacity=".55" fill="none"/>
<g stroke-linejoin="round" stroke-linecap="round">
<!-- inner dark face -->
<path d="M379.3 111.5L562.5 169.9L578 170.5L670.5 139L674 262L383.6 262Z" fill="url(#gIn)"/><path d="M379.3 111.5L480 143.6L480 262L383.6 262Z" fill="url(#gInL)"/>
<!-- top face -->
<path d="M363.5 68.5L567.4 0L743.7 0L860.7 37.4L574.8 136.2Z" fill="url(#gTop)"/>
<!-- bullnose cylinder + underside -->
<path d="M574.8 136.2L860.7 37.4C868 40 873 47 875.7 57.1L875.4 61.3C875 67 869 71 862 73L580 169.8C586 164 588 150 574.8 136.2Z" fill="url(#gBull)"/>
<!-- L end cap -->
<path d="M355.4 262L351.2 82C351.2 74 355 69.5 361.5 68.6L574.8 136.2C582 138.5 587.5 146 587.2 154.6C587 163 584 169.5 577 170.3L562.5 169.9L379.3 111.5L383.6 262Z" fill="url(#gCap)"/>
<!-- edges upper -->
<path d="M355.4 262L351.2 82C351.2 74 355 69.5 361.5 68.6L567.4 0M743.7 0L860.7 37.4C868 40 873 47 875.7 57.1L875.4 61.3C875 67 869 71 862 73L580 169.8M586.6 160L875.4 61.3M363.5 68.5L574.8 136.2C582 138.5 587.5 146 587.2 154.6C587 163 584 169.5 577 170.3L562.5 169.9L379.3 111.5L383.6 262M574.8 136.2L860.7 37.4M670.5 139L674 262" fill="none" stroke="#0d0d0c" stroke-width="1.1"/>
<!-- lower: right face -->
<path d="M609 700L900 700L900 763.2L612.7 859.5Z" fill="url(#gRight)"/>
<path d="M890 776.5L611 868.5L613 879L872 793.2Z" fill="url(#gUnder)"/><path d="M900 763.2C900 770 897 774.5 891.4 776.5L611.6 869L612.7 859.5Z" fill="#5c5c57"/>
<!-- lower: hook interior surface -->
<path d="M484.9 700L383 760L384 764L440 800L500 822L560 824L588 810L588 700Z" fill="url(#gHook)"/><path d="M464.1 700L379.1 757.1L381 760L387 758.8L484.9 700Z" fill="url(#gTip)"/>
<path d="M524 725L581.3 752L581.3 700L500 700Z" fill="#6b6a63"/>
<!-- lower: front J face -->
<path d="M581.3 700L582.4 786.9C582 797 577 808 565.6 816C557 819 549 818.6 540.9 818.3C530 818 518 817 507.2 815C492 812 477 808 462.3 802.6C447 796.5 432 789 417.4 780C407 773.5 397 766.5 387 758.8C383 757 381 757 379.2 757.7C371 761 369 766 369 771L369.5 785C371 798 376 804 386 807L599.3 875C606 877 611 873 611.6 867.7L612.3 858.7L609.4 725L609 700Z" fill="url(#gFront)"/>
<!-- grid overlay on lower part -->
<g clip-path="url(#cLow)" opacity=".75"><use href="#grid"/></g>
<!-- edges lower -->
<path d="M387 758.8L379.2 757.4C371 760.5 369 766 369 771L369.5 785C371 798 376 804 386 807L599.3 875C606 877 611 873 611.6 867.7L612.3 858.7L609.4 725L609 700M581.3 700L582.4 786.9C582 797 577 808 565.6 816C557 819 549 818.6 540.9 818.3C530 818 518 817 507.2 815C492 812 477 808 462.3 802.6C447 796.5 432 789 417.4 780C407 773.5 397 766.5 387 758.8L442 725M524 725L581.3 752M612.7 859.5L900 763.2L900 700M565.6 816L572 810" fill="none" stroke="#0d0d0c" stroke-width="1.1"/>
</g>

</svg>
<div id="dlg"></div><div id="ttl"></div>
<span class="t " style="left:91.4px;top:241.47px;font-size:11.5px;letter-spacing:-.62px;color:#7c7c7c">PARAMETER</span>
<div class="a" style="left:107px;top:285px;width:23px;height:23px;background:#cfe0f0"></div>
<div class="a" style="left:141px;top:285px;width:2px;height:23px;background:#b9b9b9"></div>
<div class="a" style="left:240px;top:285px;width:699px;height:20px;border:1px solid #8c8c8c;background:#fff"></div>
<span class="t " style="left:244.5px;top:289.16px;font-size:13.55px;color:#8c8c8c">Alle Parameter filtern</span>
<span class="t " style="left:1103.3px;top:288.98px;font-size:13.45px;color:#1c1c1c">Automatisch aktualisieren</span>
<div class="a" style="left:106px;top:326px;width:1152px;height:344px;border:1px solid #8a8a8a;background:#f5f5f5"></div>
<div class="a" style="left:107px;top:327px;width:1152px;height:29px;background:#fff"></div>
<div class="a" style="left:336px;top:327px;width:1px;height:29px;background:#e4e4e4"></div>
<div class="a" style="left:456px;top:327px;width:1px;height:29px;background:#e4e4e4"></div>
<div class="a" style="left:526px;top:327px;width:1px;height:29px;background:#e4e4e4"></div>
<div class="a" style="left:916px;top:327px;width:1px;height:29px;background:#e4e4e4"></div>
<div class="a" style="left:1096px;top:327px;width:1px;height:29px;background:#e4e4e4"></div>
<span class="t h" style="left:111.8px;top:334.30px;">Parameter</span>
<span class="t h" style="left:341.4px;top:334.30px;">Name</span>
<span class="t h" style="left:461.6px;top:334.30px;">Einheit</span>
<span class="t h" style="left:531.2px;top:334.30px;">Ausdruck</span>
<span class="t h" style="left:921.0px;top:334.30px;">Wert</span>
<span class="t h" style="left:1101.4px;top:334.30px;">Kommentare</span>
<div class="a" style="left:127px;top:356px;width:1132px;height:50px;background:#ebebeb"></div>
<div class="a" style="left:147px;top:406px;width:1112px;height:21px;background:#cfcfcf"></div>
<div class="a" style="left:127px;top:427px;width:1132px;height:25px;background:#ebebeb"></div>
<span class="t g" style="left:152.6px;top:361.10px;">Favoriten</span>
<span class="t g" style="left:152.6px;top:385.80px;">Benutzerparameter</span>
<span class="t g" style="left:152.6px;top:432.30px;">Modellparameter</span>
<span class="t r" style="left:172.3px;top:410.83px;">User Parameter</span>
<span class="t r" style="left:340.3px;top:410.83px;">thickness</span>
<span class="t r" style="left:460.4px;top:410.83px;">mm</span>
<span class="t r" style="left:530.2px;top:411.17px;font-size:12.2px">28 mm</span>
<span class="t r" style="left:920.3px;top:411.17px;font-size:12.2px">28.00</span>
<span class="t r" style="left:172.3px;top:457.13px;font-size:12.8px">headphone holder v3</span>
<div class="a" style="left:107px;top:655px;width:1152px;height:16px;background:#f0f0f0;border-top:1px solid #f9f9f9;box-sizing:border-box"></div>
<div class="a" style="left:124px;top:662px;width:1100px;height:2px;background:#8a8a8a"></div>
<div class="a" style="left:1174px;top:690px;width:84px;height:22px;border:1px solid #adadad;background:#e1e1e1"></div>
<span class="t " style="left:1209.3px;top:696.04px;font-size:12px;letter-spacing:-1.2px;color:#111">OK</span>
<svg id="ic" width="1336" height="890" viewBox="0 0 1336 890">
<!-- close X -->
<path d="M1263 241.5L1273 251.5M1273 241.5L1263 251.5" stroke="#8a8a8a" stroke-width="1.1" fill="none"/>
<!-- fx button glyph -->
<text y="300.2" font-family="'Liberation Serif',serif" font-style="italic" font-size="17.5" fill="#5d6670"><tspan x="111.4">f</tspan><tspan x="118">x</tspan></text>
<!-- fx user -->
<text y="297.4" font-family="'Liberation Serif',serif" font-style="italic" font-size="13.5" fill="#666"><tspan x="159">f</tspan><tspan x="163.6">x</tspan></text>
<circle cx="170.1" cy="297.8" r="2.5" fill="#1b8ad8"/><path d="M165.9 304.2C165.9 299.6 174.3 299.6 174.3 304.2Z" fill="#1b8ad8"/>
<!-- star dark -->
<path id="st" d="M0 -8L1.9 -2.6L7.6 -2.5L3.05 1L4.7 6.5L0 3.2L-4.7 6.5L-3.05 1L-7.6 -2.5L-1.9 -2.6Z" transform="translate(195 296.6)" fill="#595959"/>
<!-- plus -->
<path d="M979 296H991M985 290V302" stroke="#7f7f7f" stroke-width="2" fill="none"/>
<!-- copy -->
<path d="M1006.2 288.2H1012.6L1015.8 291.4V292.4H1011.4V298.9H1006.2Z" fill="#7f7f7f"/>
<path d="M1012.3 293.2H1018.4L1021.9 296.7V303.9H1012.3Z" fill="#7f7f7f"/>
<path d="M1013.2 288.4L1015.7 290.9H1013.2ZM1019.2 293.3L1021.8 295.9H1019.2Z" fill="#7f7f7f"/>
<!-- trash -->
<path d="M1037.1 290H1049.1V291.8H1037.1ZM1038.1 293.1H1048.1V303.9H1038.1Z" fill="#7f7f7f"/><path d="M1040.6 290V288.5H1045.6V290" stroke="#7f7f7f" stroke-width="1" fill="none"/>
<!-- checkbox -->
<rect x="1088" y="289.8" width="13" height="13" rx="2.6" fill="#0b62c4"/><path d="M1091 296.3L1093.6 298.9L1098.2 293.4" stroke="#e4efff" stroke-width="1" fill="none"/>
<!-- sort indicator -->
<path d="M219.4 328.3L222.5 331.4L225.6 328.3" stroke="#8c8c8c" stroke-width="1" fill="none"/>
<!-- blue star -->
<path d="M0 -8L1.9 -2.6L7.6 -2.5L3.05 1L4.7 6.5L0 3.2L-4.7 6.5L-3.05 1L-7.6 -2.5L-1.9 -2.6Z" transform="translate(138 368.8)" fill="#189de0"/>
<!-- chevrons -->
<path d="M112.6 390.6L116.5 394.6L120.4 390.6M112.6 436.7L116.5 440.7L120.4 436.7" stroke="#222" stroke-width="1.7" fill="none"/>
<path d="M134.3 458L138.5 462.2L134.3 466.4" stroke="#8a8a8a" stroke-width="1.5" fill="none"/>
<!-- fx row icon -->
<text y="397.4" font-family="'Liberation Serif',serif" font-style="italic" font-size="17" fill="#7a7a7a"><tspan x="131.6">f</tspan><tspan x="138.4">x</tspan></text>
<!-- star outline -->
<path d="M0 -8L1.9 -2.6L7.6 -2.5L3.05 1L4.7 6.5L0 3.2L-4.7 6.5L-3.05 1L-7.6 -2.5L-1.9 -2.6Z" transform="translate(157.1 416.6) scale(.8)" fill="none" stroke="#777" stroke-width="1.25"/>
<!-- cube -->
<g stroke="#333" stroke-width="1" fill="#e3e3e6" stroke-linejoin="round"><path d="M131 436.5C131 435 132 434.4 133 434.2L134.8 431.8H144C145.3 431.8 145.8 432.4 145.8 433.6V442.6L142.6 445.8H133C131.6 445.8 131 445.2 131 444Z"/><path d="M131.3 434.6H141.2C142.4 434.6 142.8 435.2 142.8 436.2V445.6M142.6 434.8L145.6 432" fill="none"/></g>
<!-- component icon -->
<g stroke="#333" stroke-width="1" fill="#ececee" stroke-linejoin="round"><path d="M150.8 457.2L153.6 454.6H159.6C160.8 454.6 161.4 455.2 161.4 456.4V460.2H163.6C165 460.2 165.6 460.8 165.6 462V466.6L163 469.4H152.4C151.2 469.4 150.8 468.8 150.8 467.8Z"/><path d="M157.4 469.2V463H163M157.4 463L159.8 460.4M150.8 462.8H157.4" fill="none"/></g>
</svg>

</body></html>
